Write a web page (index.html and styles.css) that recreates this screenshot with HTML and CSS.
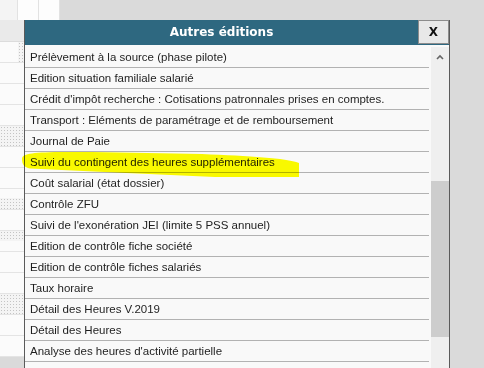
FILE: index.html
```html
<!DOCTYPE html>
<html lang="fr">
<head>
    <meta charset="UTF-8">
    <title>Autres éditions</title>
    <link rel="stylesheet" href="styles.css">
</head>
<body>
    <div class="sheet-top">
        <div class="cell cell-first"></div>
        <div class="cell"></div>
        <div class="cell"></div>
    </div>

    <div class="sheet-main">
        <div class="side">
            <div class="side-row side-head"></div>
            <div class="side-row dots-edge"></div>
            <div class="side-row"></div>
            <div class="side-row"></div>
            <div class="side-row"></div>
            <div class="side-row dots"></div>
            <div class="side-row"></div>
            <div class="side-row"></div>
            <div class="side-row dots-low"></div>
            <div class="side-row"></div>
            <div class="side-row dots-top"></div>
            <div class="side-row"></div>
            <div class="side-row"></div>
            <div class="side-row dots"></div>
            <div class="side-row"></div>
            <div class="side-row"></div>
        </div>

        <div class="dialog">
            <div class="dialog-head">
                <span class="dialog-title">Autres éditions</span>
                <button class="close-btn">X</button>
            </div>
            <div class="dialog-body">
                <ul class="edition-list">
                    <li>Prélèvement à la source (phase pilote)</li>
                    <li>Edition situation familiale salarié</li>
                    <li>Crédit d'impôt recherche : Cotisations patronnales prises en comptes.</li>
                    <li>Transport : Eléments de paramétrage et de remboursement</li>
                    <li>Journal de Paie</li>
                    <li>Suivi du contingent des heures supplémentaires</li>
                    <li>Coût salarial (état dossier)</li>
                    <li>Contrôle ZFU</li>
                    <li>Suivi de l'exonération JEI (limite 5 PSS annuel)</li>
                    <li>Edition de contrôle fiche société</li>
                    <li>Edition de contrôle fiches salariés</li>
                    <li>Taux horaire</li>
                    <li>Détail des Heures V.2019</li>
                    <li>Détail des Heures</li>
                    <li>Analyse des heures d'activité partielle</li>
                    <li>Analyse des heures</li>
                </ul>
                <div class="scrollbar">
                    <div class="scroll-up">
                        <svg width="8" height="6" viewBox="0 0 8 6"><path d="M1 5 L4 2 L7 5" fill="none" stroke="#666" stroke-width="1.6"/></svg>
                    </div>
                    <div class="scroll-thumb"></div>
                </div>
            </div>
        </div>
    </div>

    <!-- surlignage fait à la main sur la capture -->
    <svg class="marker" width="484" height="368" viewBox="0 0 484 368">
        <path d="M22,159 C22,154 30,152.5 60,152 L92,152 L202,154 C250,156 285,158 299,163 L299,177 L215,177 L115,172.5 L30,168.5 C24,167.5 22,164 22,159 Z" fill="#ffff00"/>
    </svg>
</body>
</html>
```

FILE: styles.css
```css
html, body {
    margin: 0;
    height: 100%;
    overflow: hidden;
}
body {
    background: #dadada;
    font-family: "Liberation Sans", Arial, sans-serif;
    position: relative;
}
.sheet-top {
    display: flex;
    height: 20px;
}
.cell {
    width: 20px;
    background: #fdfdfd;
    border-right: 1px solid #e2e2e2;
}
.cell-first {
    width: 17px;
    background: #f4f4f4;
}
.sheet-main {
    display: flex;
}
.side {
    width: 24px;
    display: flex;
    flex-direction: column;
}
.side-row {
    height: 20px;
    background: #fbfbfb;
    border-bottom: 1px solid #e4e4e4;
}
.side-head {
    height: 21px;
    background: #eaeaea;
    border-bottom: 1px solid #dcdcdc;
}
.dots,
.dots-edge,
.dots-low,
.dots-top {
    background-color: #f4f4f4;
    background-image: radial-gradient(#c4c4c4 0.6px, transparent 0.8px);
    background-size: 3px 3px;
}
.dots-edge {
    background: linear-gradient(to right, #fbfbfb 18px, transparent 18px), radial-gradient(#c4c4c4 0.6px, transparent 0.8px) #f4f4f4;
    background-size: 100% 100%, 3px 3px;
}
.dots-low {
    background: linear-gradient(#fbfbfb 9px, transparent 9px), radial-gradient(#c4c4c4 0.6px, transparent 0.8px) #f4f4f4;
    background-size: 100% 100%, 3px 3px;
}
.dots-top {
    background: linear-gradient(transparent 10px, #fbfbfb 10px), radial-gradient(#c4c4c4 0.6px, transparent 0.8px) #f4f4f4;
    background-size: 100% 100%, 3px 3px;
}

.dialog {
    width: 424px;
    border-left: 1px solid #5a5a5a;
    border-right: 1px solid #5a5a5a;
    background: #f9f9f9;
    display: flex;
    flex-direction: column;
}
.dialog-head {
    display: flex;
    height: 25px;
    background: #2e6880;
}
.dialog-title {
    flex: 1;
    text-align: center;
    color: #fff;
    font-family: "DejaVu Sans", Verdana, sans-serif;
    font-weight: bold;
    font-size: 12px;
    line-height: 25px;
}
.close-btn {
    width: 31px;
    height: 24px;
    margin: 0;
    padding: 0;
    border: 1px solid #8c8c8c;
    background: #e8e8e8;
    font-family: "DejaVu Sans", Verdana, sans-serif;
    font-weight: bold;
    font-size: 12px;
    color: #111;
}
.dialog-body {
    display: flex;
    padding-top: 2px;
}
.edition-list {
    list-style: none;
    margin: 0;
    padding: 0;
    width: 404px;
}
.edition-list li {
    height: 20px;
    line-height: 21px;
    padding-left: 5px;
    border-bottom: 1px solid #b2b2b2;
    font-size: 11.5px;
    color: #1e1e1e;
    white-space: nowrap;
}
.scrollbar {
    width: 18px;
    margin-left: 2px;
    background: #efefef;
    display: flex;
    flex-direction: column;
}
.scroll-up {
    height: 20px;
    display: flex;
    align-items: center;
    justify-content: center;
}
.scroll-thumb {
    margin-top: 114px;
    height: 156px;
    background: #cdcdcd;
}
.marker {
    position: absolute;
    left: 0;
    top: 0;
    pointer-events: none;
    mix-blend-mode: multiply;
}
```
